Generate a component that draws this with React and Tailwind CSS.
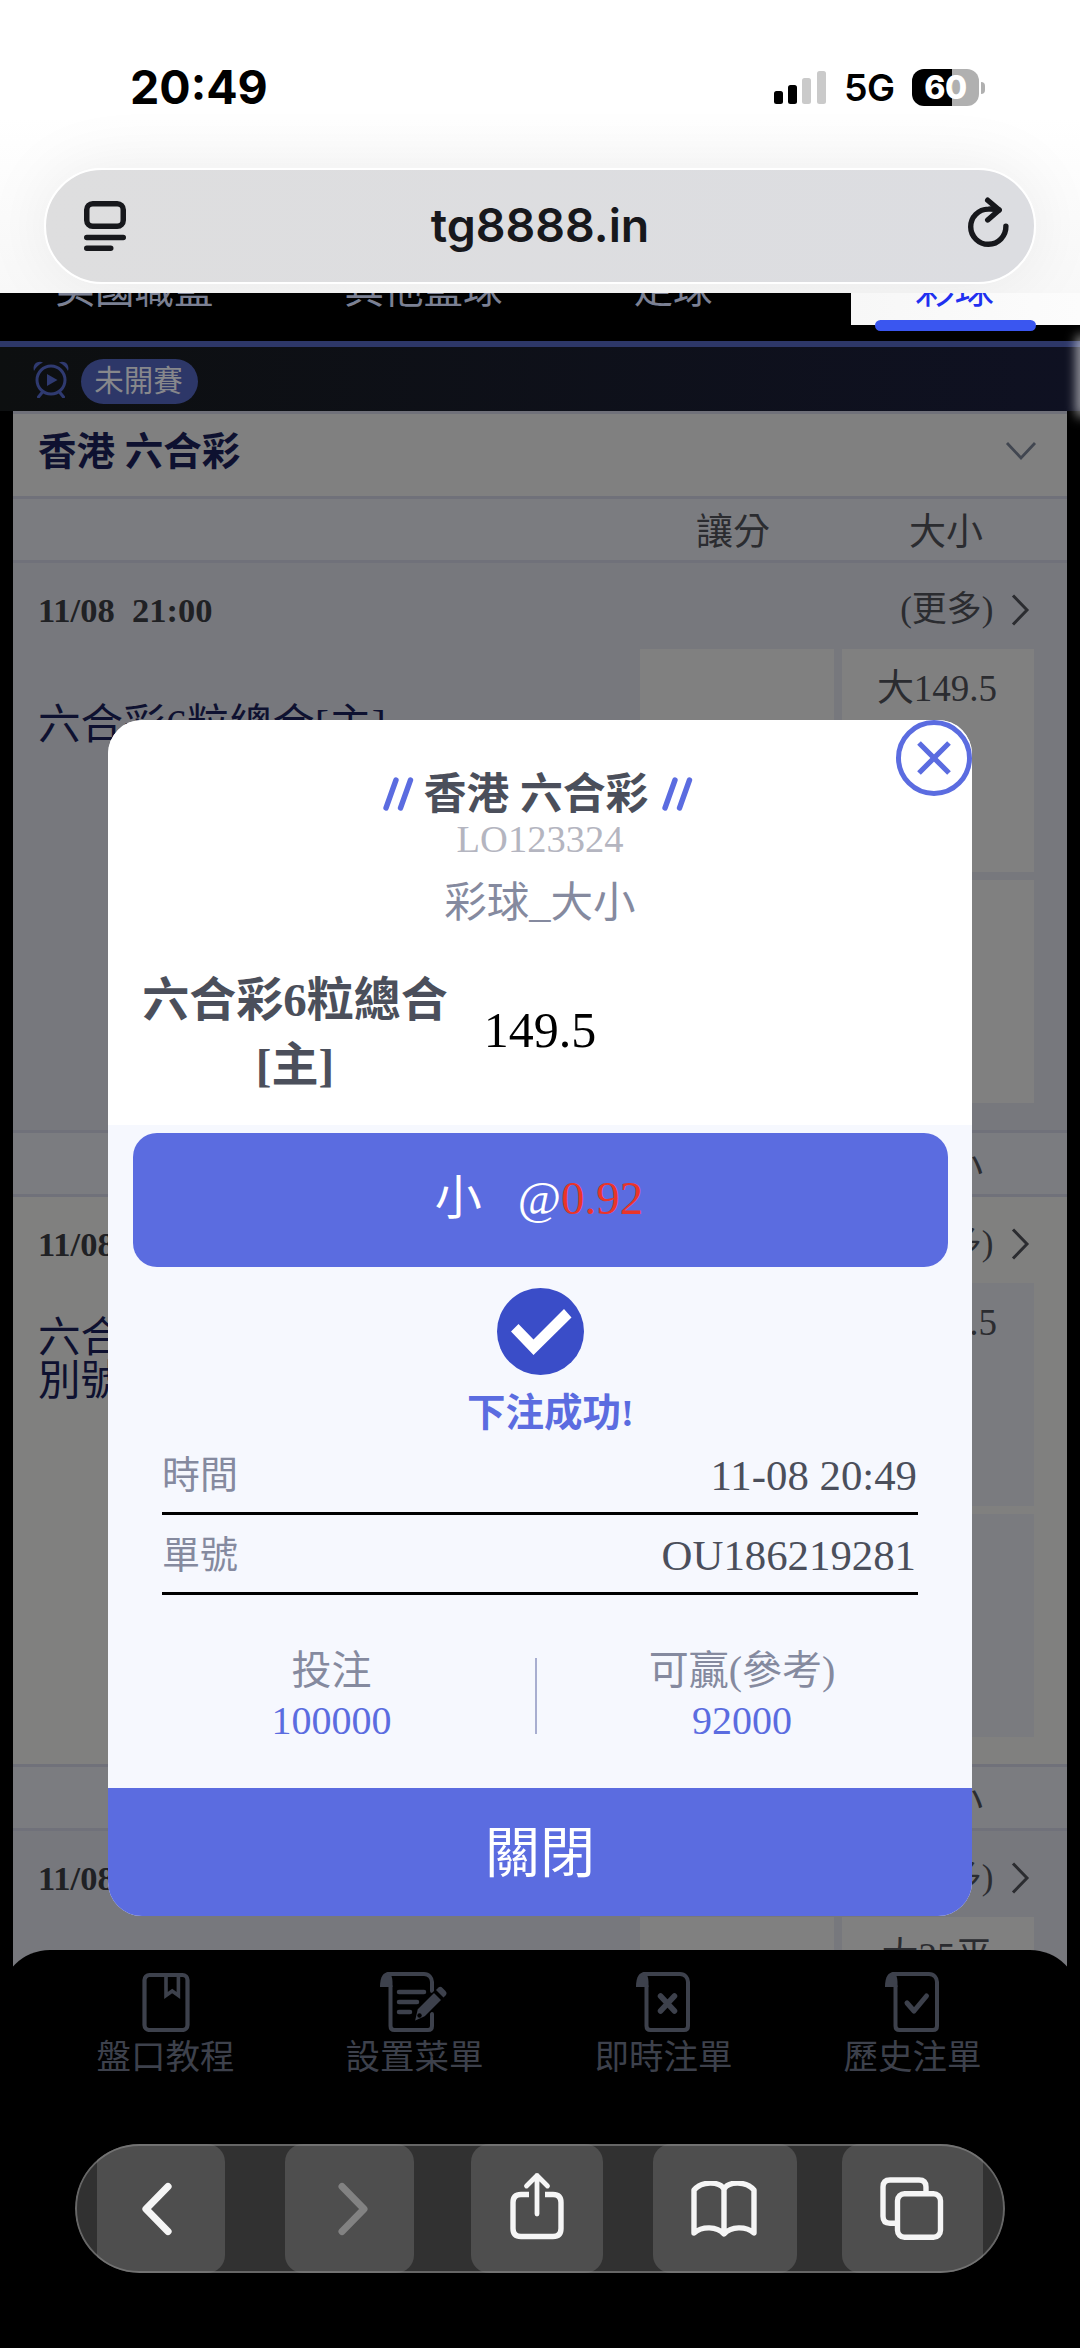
import React from 'react';

const matches = [
  { id: 1, time: '11/08  21:00', team: ['六合彩6粒總合[主]'], line: '大149.5', alt: false },
  { id: 2, time: '11/08  21:00', team: ['六合彩特', '別號大小'], line: '大174.5', alt: true },
  { id: 3, time: '11/08  21:00', team: ['六合彩特碼總', '合大小[主]'], line: '大25平', alt: false },
];

const StatusBar = () => (
  <div className="h-[168px] pt-[67px] pl-[130px] pr-[95px] flex items-start justify-between font-['Inter',sans-serif] text-black">
    <span className="text-[46.500px] leading-[41px] font-bold">20:49</span>
    <div className="flex items-center h-[41px]">
      <svg width="52" height="34" viewBox="0 0 52 34" className="mr-[18px]">
        <rect x="0" y="20" width="9" height="13" rx="2.5" fill="#000" />
        <rect x="14" y="14" width="9" height="19" rx="2.5" fill="#000" />
        <rect x="28" y="7" width="9" height="26" rx="2.5" fill="#cacaca" />
        <rect x="43" y="0" width="9" height="33" rx="2.5" fill="#cacaca" />
      </svg>
      <span className="w-[50px] mr-[18px] text-[37.500px] leading-[41px] font-semibold tracking-[-0.5px]">5G</span>
      <div className="w-[67px] h-[37px] rounded-[12px] bg-[linear-gradient(90deg,#000_60%,#b0b0b0_60%)] text-white text-[32px] leading-[37px] font-extrabold text-center tracking-[-0.5px]">60</div>
      <div className="w-[4px] h-[12px] ml-[2px] rounded-r-full bg-[#b0b0b0]" />
    </div>
  </div>
);

const AddressBar = () => (
  <div className="mx-[44px] h-[116px] px-[38px] rounded-full border-2 border-white bg-gradient-to-r from-[#dededf] to-[#dcdde1] shadow-[0_0_70px_rgba(0,0,0,0.07)] flex items-center justify-between text-[#17181c]">
    <svg width="42" height="50" viewBox="0 0 42 50" fill="none" stroke="currentColor" strokeWidth="5.5" strokeLinecap="round">
      <rect x="2.75" y="2.75" width="36.5" height="22.5" rx="6" />
      <path d="M2.75 36.5h36.5M2.75 47.2h24" />
    </svg>
    <span className="ml-[-11px] font-['Inter',sans-serif] text-[46.500px] font-semibold">tg8888.in</span>
    <svg width="46" height="54" viewBox="0 0 46 54" fill="none" stroke="currentColor" strokeWidth="5.4" strokeLinecap="round" strokeLinejoin="round" className="mr-[-15px] mt-[-8px]">
      <path d="M40.9 31.2A17.600 17.600 0 1 1 23.300 14.1Q29 13.800 34 15" />
      <path d="M22.700 5.200L34.2 15 22.700 25" />
    </svg>
  </div>
);

const SportTabs = () => (
  <div className="h-[48px] overflow-hidden bg-black flex text-[39.500px] leading-[44px] text-[#7b8093]">
    <div className="w-[269px] h-[32px] flex justify-center"><span className="mt-[-25px]">美國職籃</span></div>
    <div className="w-[309px] h-[32px] flex justify-center"><span className="mt-[-25px]">其他籃球</span></div>
    <div className="w-[190px] h-[32px] flex justify-center"><span className="mt-[-25px]">足球</span></div>
    <div className="relative ml-auto w-[229px] h-[32px] bg-gradient-to-r from-[#f7f7f7] to-[#fcfcfc] flex justify-center">
      <span className="mt-[-25px] mr-[22px] text-[#2030f0]">彩球</span>
      <div className="absolute left-[24px] top-[27px] w-[161px] h-[11px] rounded-full bg-[#3a56f0]" />
    </div>
  </div>
);

const StateBar = () => (
  <div className="h-[64px] bg-gradient-to-r from-[#0d0f10] to-[#0f1122] flex items-center pl-[33px]">
    <svg width="36" height="37" viewBox="0 0 36 37" fill="none" stroke="#2f3a70" strokeWidth="3">
      <circle cx="18" cy="19" r="14" />
      <path d="M14 13v12l10.500-6z" fill="#2f3a70" stroke="none" />
      <path d="M9.500 31l-4 5M26.500 31l4 5" strokeLinecap="round" />
      <path d="M1 10C-1 4 4-1 10 1.500 6 3.500 3 6 1 10zM35 10C37 4 32-1 26 1.500c4 2 7 4.500 9 8.500z" fill="#2f3a70" stroke="none" />
    </svg>
    <span className="ml-[12px] mt-[4px] h-[45px] w-[117px] pr-[2px] rounded-full bg-[#2d3768] text-[#87888c] text-[29.500px] leading-[45px] text-center">未開賽</span>
  </div>
);

const ColumnHead = () => (
  <div className="h-[67px] border-y-[3px] border-[#70717a] bg-[#7b7c80] flex items-center pt-[6px] pl-[627px] text-[37px] leading-[55px] text-[#2b2c30]">
    <span className="w-[186px] text-center">讓分</span>
    <span className="w-[240px] text-center">大小</span>
  </div>
);

const Match = ({ match }) => {
  const cell = match.alt ? 'bg-[#7a7b7f]' : 'bg-[#808080]';
  return (
    <div className={match.alt ? 'h-[567px] bg-[#80807f]' : 'h-[567px] bg-[#77787d]'}>
      <div className="h-[86px] pl-[25px] pr-[37px] pt-[7px] flex items-center justify-between">
        <span className="mt-[2px] text-[34.500px] font-bold whitespace-pre text-[#202124]">{match.time}</span>
        <div className="flex items-center text-[#2b2c30]">
          <span className="text-[35px] leading-[40px]">(更多)</span>
          <svg width="19" height="34" viewBox="0 0 19 34" fill="none" stroke="currentColor" strokeWidth="3" className="ml-[17px]">
            <path d="M2 2.500l14 14.500L2 31.500" />
          </svg>
        </div>
      </div>
      <div className="flex">
        <div className="w-[627px] h-[151px] pl-[25px] flex flex-col justify-center text-[42.600px] leading-[43px] text-[#0e1130]">
          {match.team.map((t) => <span key={t}>{t}</span>)}
        </div>
        <div className="grid grid-cols-[194px_192px] grid-rows-[223px_223px] gap-[8px]">
          <div className={cell} />
          <div className={`${cell} pt-[17px] pr-[2px] text-center text-[37px] leading-[46px] text-[#2b2c30]`}>{match.line}</div>
          <div className={cell} />
          <div className={cell} />
        </div>
      </div>
    </div>
  );
};

const Paper = ({ children, className }) => (
  <svg width="68" height="60" viewBox="0 0 68 60" fill="none" stroke="currentColor" strokeWidth="4" strokeLinecap="round" strokeLinejoin="round" className={className}>
    <path d="M9.500 0C3 0 0 5 0 15h12.500V10C12.500 6 11 2 9.500 0z" fill="currentColor" stroke="none" />
    {children}
  </svg>
);

const menu = [
  {
    label: '盤口教程',
    icon: (
      <svg width="68" height="60" viewBox="0 0 68 60" fill="none" stroke="currentColor" strokeWidth="4.200">
        <rect x="12.500" y="3" width="43" height="55" rx="5" />
        <path d="M34 3v20.500l6.200-4.500 6.200 4.500V3" strokeWidth="3.600" />
      </svg>
    ),
  },
  {
    label: '設置菜單',
    icon: (
      <Paper className="mr-[2px]">
        <path d="M8 2h36c5 0 8 4 8 8v9M10.500 14v40q0 4 4 4H48q4 0 4-4V42" />
        <path d="M19 20h25M19 30h18M19 40h11" strokeWidth="4.500" />
        <path d="M34 50l3-13 17-17 8 8-17 17z" fill="currentColor" stroke="#000" strokeWidth="1.500" />
        <path d="M56 18l2.500-2.500q2-1.500 4 .5l3 3q2 2 .5 4L63.500 25.500z" fill="currentColor" stroke="none" />
        <circle cx="39.500" cy="43.500" r="2.200" fill="#000" stroke="none" />
      </Paper>
    ),
  },
  {
    label: '即時注單',
    icon: (
      <Paper className="ml-[13px]">
        <path d="M8 2h36c5 0 8 4 8 8v44q0 4-4 4H14.500q-4 0-4-4V14" />
        <path d="M24.500 24l14 15M38.500 24l-14 15" strokeWidth="5.500" />
      </Paper>
    ),
  },
  {
    label: '歷史注單',
    icon: (
      <Paper className="ml-[13px]">
        <path d="M8 2h36c5 0 8 4 8 8v44q0 4-4 4H14.500q-4 0-4-4V14" />
        <path d="M22 31l7 8 12.500-15" strokeWidth="5" />
      </Paper>
    ),
  },
];

const Toolbar = () => (
  <div className="relative mx-[75px] mt-[64px] h-[129px] rounded-full overflow-hidden bg-[#313131] flex pl-[22px] text-[#f5f5f5]">
    <div className="w-[128px] mr-[60px] rounded-r-[18px] bg-[#4e4e4e] flex items-center justify-center">
      <svg width="30" height="54" viewBox="0 0 30 54" fill="none" stroke="currentColor" strokeWidth="7.200" strokeLinecap="round" strokeLinejoin="round" className="mr-[8px]">
        <path d="M26 4.500L4 27l22 22.500" />
      </svg>
    </div>
    <div className="w-[129px] mr-[57px] rounded-[18px] bg-[#4e4e4e] flex items-center justify-center text-[#828282]">
      <svg width="30" height="54" viewBox="0 0 30 54" fill="none" stroke="currentColor" strokeWidth="7" strokeLinecap="round" strokeLinejoin="round" className="ml-[7px]">
        <path d="M4 4.500L26 27 4 49.500" />
      </svg>
    </div>
    <div className="w-[132px] mr-[50px] rounded-[18px] bg-[#4e4e4e] flex items-center justify-center">
      <svg width="54" height="68" viewBox="0 0 54 68" fill="none" stroke="currentColor" strokeWidth="5.400" strokeLinecap="round" strokeLinejoin="round" className="mb-[5px]">
        <path d="M19 22.500h-8q-8 0-8 8v26q0 8 8 8h32q8 0 8-8v-26q0-8-8-8h-8" strokeLinecap="butt" />
        <path d="M27 42V3.500M16.500 14L27 3.500 37.500 14" strokeWidth="4.800" />
      </svg>
    </div>
    <div className="w-[144px] mr-[45px] rounded-[18px] bg-[#4e4e4e] flex items-center justify-center">
      <svg width="66" height="56" viewBox="0 0 66 56" fill="none" stroke="currentColor" strokeWidth="5.400" strokeLinejoin="round" className="ml-[-2px]">
        <path d="M33 8C28 0 11 0 3 9V52c8-7 23-7 30 1 7-8 22-8 30-1V9C55 0 38 0 33 8zM33 8v45" />
      </svg>
    </div>
    <div className="w-[141px] rounded-l-[18px] bg-[#4e4e4e] flex items-center justify-center">
      <svg width="64" height="64" viewBox="0 0 64 64" fill="none" stroke="currentColor" strokeWidth="5.400" className="ml-[-2px]">
        <rect x="17.500" y="16.700" width="43" height="43.600" rx="7" />
        <path d="M15 46.300h-5q-7 0-7-7V10q0-7 7-7h29q7 0 7 7v5" />
      </svg>
    </div>
    <div className="absolute inset-0 rounded-full border-2 border-[#8a8a8a]/60" />
  </div>
);

const BottomArea = () => (
  <div className="absolute inset-x-0 bottom-0 h-[398px] rounded-t-[50px] bg-black">
    <div className="ml-[41px] mr-[43px] pt-[22px] grid grid-cols-4 text-[#3d414c]">
      {menu.map((item) => (
        <div key={item.label} className="flex flex-col items-center">
          {item.icon}
          <span className="mt-[3px] mb-[1px] text-[34.500px] leading-[44px]">{item.label}</span>
        </div>
      ))}
    </div>
    <Toolbar />
  </div>
);

const Slashes = () => (
  <svg width="31" height="34" viewBox="0 0 31 34" fill="none" stroke="#5b6ce0" strokeWidth="5.400" strokeLinecap="round">
    <path d="M3 31L13 3M17.500 31L27.500 3" />
  </svg>
);

const BetModal = () => (
  <div className="absolute left-[108px] top-[719.5px] w-[864px] h-[1196.5px] rounded-[34px] bg-[#f6f8fe] overflow-hidden flex flex-col">
    <button className="absolute right-0 top-0 size-[76px] rounded-full border-[5.500px] border-[#5b6ce0] flex items-center justify-center">
      <svg width="34" height="34" viewBox="0 0 34 34" stroke="#5b6ce0" strokeWidth="5.200">
        <path d="M2 2l30 30M32 2L2 32" />
      </svg>
    </button>
    <div className="h-[405.5px] bg-white pt-[50px]">
      <div className="mr-[4px] flex items-center justify-center h-[48px]">
        <Slashes />
        <span className="ml-[10px] mr-[14px] mt-[2px] text-[42.800px] leading-[48px] font-bold text-[#4b4f5b]">香港 六合彩</span>
        <Slashes />
      </div>
      <div className="text-center text-[38.500px] leading-[42px] text-[#b4b5c0]">LO123324</div>
      <div className="mt-[18px] text-center text-[42.500px] leading-[50px] text-[#858a9f]">彩球_大小</div>
      <div className="mt-[40px] grid grid-cols-3 items-center px-[20px]">
        <div className="w-[334px] text-center text-[47px] leading-[65px] font-bold text-[#4b4f5b]">六合彩6粒總合<br />[主]</div>
        <div className="mt-[-5px] text-center text-[50px] leading-[60px] text-black">149.5</div>
      </div>
    </div>
    <div className="mx-[24.500px] mt-[8px] h-[134px] rounded-[24px] bg-[#5b6ce0] flex items-center justify-center pb-[4px] pr-[2px] text-[47px] leading-[60px] text-white">
      <span className="mr-[36px]">小</span>
      <span>@</span>
      <span className="text-[#ea3529]">0.92</span>
    </div>
    <div className="mt-[21px] flex justify-center">
      <svg width="87" height="87" viewBox="0 0 87 87">
        <circle cx="43.500" cy="43.500" r="43.500" fill="#3a4dc8" />
        <path d="M14 43.500l7.500-7.500L36.500 51.500 67 21l7.500 8.500L36.500 67z" fill="#fff" />
      </svg>
    </div>
    <div className="mt-[14px] ml-[21px] text-center text-[38.500px] leading-[48px] font-bold text-[#5b6ce0]">下注成功!</div>
    <div className="mx-[54px] h-[78px] border-b-[3px] border-black flex items-center justify-between pt-[3px] text-[38px] leading-[50px] text-[#858a9f]">
      <span className="mt-[-2px]">時間</span>
      <span className="mr-[1px] text-[42.800px] text-[#4b4f5b]">11-08 20:49</span>
    </div>
    <div className="mx-[54px] h-[80px] border-b-[3px] border-black flex items-center justify-between pt-[4px] text-[38px] leading-[50px] text-[#858a9f]">
      <span className="mt-[-1px]">單號</span>
      <span className="mr-[2px] text-[42.800px] text-[#4b4f5b]">OU186219281</span>
    </div>
    <div className="mx-[20px] mt-[50px] flex items-center text-center text-[40px] leading-[51px] text-[#858a9f]">
      <div className="w-[407px]">
        <div>投注</div>
        <div className="mt-[-1px] text-[#5b6ce0]">100000</div>
      </div>
      <div className="w-[2px] h-[76px] bg-[#a8aed0]" />
      <div className="w-[410px]">
        <div>可贏(參考)</div>
        <div className="mt-[-1px] text-[#5b6ce0]">92000</div>
      </div>
    </div>
    <button className="mt-auto h-[128px] bg-[#5b6ce0] text-white text-[55px] leading-[131px]">關閉</button>
  </div>
);

const App = () => (
  <div className="relative w-[1080px] h-[2348px] overflow-hidden bg-black font-['Liberation_Serif','Noto_Sans_CJK_TC',serif]">
    <header className="h-[293px] overflow-hidden bg-gradient-to-b from-white from-40% to-[#f8f8f8]">
      <StatusBar />
      <AddressBar />
    </header>
    <SportTabs />
    <div className="h-[6px] bg-[#2d3768]" />
    <StateBar />
    <main className="ml-[13px] mr-[13.5px]">
      <div className="h-[85px] border-t-[3px] border-[#70717a] bg-[#808080] pl-[25px] pr-[30px] flex items-center justify-between">
        <h1 className="mt-[-6px] text-[38.500px] leading-[60px] font-bold text-[#0e1130]">香港 六合彩</h1>
        <svg width="32" height="20" viewBox="0 0 32 20" fill="none" stroke="#414650" strokeWidth="2.800" className="mt-[-9px]">
          <path d="M2 2l14 15L30 2" />
        </svg>
      </div>
      {matches.map((match) => (
        <React.Fragment key={match.id}>
          <ColumnHead />
          <Match match={match} />
        </React.Fragment>
      ))}
    </main>
    <div className="absolute right-[-5px] top-[338px] w-[5px] h-[76px] rounded-full shadow-[0_0_12px_3px_rgba(255,255,255,0.7)]" />
    <BottomArea />
    <BetModal />
  </div>
);

export default App;
